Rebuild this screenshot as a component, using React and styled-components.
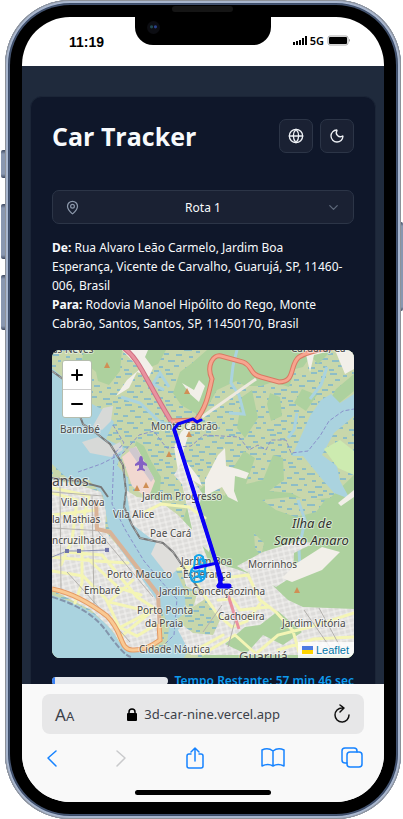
import React from 'react';
import styled, { createGlobalStyle } from 'styled-components';
import { Globe, Moon, MapPin, ChevronDown } from 'lucide-react';

const GlobalStyle = createGlobalStyle`
  * { box-sizing: border-box; }
  body { margin: 0; background: #fff; overflow: hidden; }
  button, select, input { font: inherit; color: inherit; }
`;

const Stage = styled.div`
  height: 100vh;
  padding: 0 2px 0 5px;
  display: flex;
  font-family: 'Noto Sans', 'Open Sans', sans-serif;
  font-size: 12px;
`;
const Phone = styled.div`
  position: relative;
  flex: 1;
  min-width: 0;
  display: flex;
  padding: 5px;
  border-radius: 65px;
  background: #50617f;
  box-shadow: inset 0 0 0 1px #8e9299, inset 0 0 0 3px #a9b7cf, inset 0 0 3px 4px #34435e;
`;
const SideKey = styled.span`
  position: absolute;
  ${(p) => (p.$right ? 'right: -2px;' : 'left: -4px;')}
  top: ${(p) => p.$top}px;
  width: ${(p) => (p.$right ? 2 : 4)}px;
  height: ${(p) => p.$height}px;
  border-radius: ${(p) => (p.$right ? '0 2px 2px 0' : '2px 0 0 2px')};
  background: linear-gradient(#3e4960, #8997b0 4px, #8997b0 calc(100% - 4px), #3e4960);
`;
const Bezel = styled.div`
  flex: 1;
  min-width: 0;
  display: flex;
  padding: 12px;
  border-radius: 60px;
  background: #000;
`;
const Screen = styled.div`
  flex: 1;
  min-width: 0;
  display: flex;
  flex-direction: column;
  overflow: hidden;
  border-radius: 48px;
  background: #fff;
`;
const Notch = styled.div`
  position: absolute;
  top: 16px;
  left: 50%;
  transform: translateX(-50%);
  width: 136px;
  height: 29px;
  border-radius: 0 0 18px 18px;
  background: #000;
  &::before {
    content: '';
    position: absolute;
    left: 12px;
    top: 5px;
    width: 13px;
    height: 13px;
    border-radius: 50%;
    background: radial-gradient(circle at 65% 45%, #29418c 0 1px, transparent 2px),
      radial-gradient(circle at 35% 45%, #204a50 0 1px, transparent 2px), #0c0d12;
  }
  &::after {
    content: '';
    position: absolute;
    left: 37px;
    top: -10px;
    width: 61px;
    height: 6px;
    border-radius: 3px;
    background: #151515;
  }
`;
const StatusBar = styled.header`
  flex: none;
  height: 49px;
  padding: 0 33px 0 47px;
  display: flex;
  align-items: center;
  justify-content: space-between;
  color: #000;
`;
const Clock = styled.time`
  font: 700 14px 'Liberation Sans', sans-serif;
`;
const Signal = styled.div`
  display: flex;
  align-items: center;
  gap: 3px;
  padding-bottom: 3px;
  font-weight: 600;
  font-size: 11px;
`;

const Page = styled.main`
  flex: 1;
  min-height: 0;
  overflow: hidden;
  padding: 30px 8px 0;
  background: #1f2a3c;
`;
const Card = styled.section`
  height: 700px;
  padding: 22px 21px 0;
  border: 1px solid #1b2537;
  border-radius: 12px;
  background: #0f172a;
  color: #f8fafc;
`;
const TitleRow = styled.div`
  display: flex;
  align-items: center;
  justify-content: space-between;
  gap: 7px;
  margin-bottom: 37px;
`;
const Title = styled.h1`
  margin: 0 auto 0 0;
  font-family: 'Open Sans', 'Noto Sans', sans-serif;
  font-size: 25px;
  line-height: 34px;
  font-weight: 700;
`;
const IconButton = styled.button`
  width: 34px;
  height: 34px;
  padding: 0;
  display: grid;
  place-items: center;
  border: 1px solid #2c3547;
  border-radius: 7px;
  background: #1a2133;
  color: #eef1f5;
`;
const RouteField = styled.label`
  display: flex;
  align-items: center;
  height: 34px;
  padding: 0 12px;
  border: 1px solid #2c3547;
  border-radius: 7px;
  background: #1a2133;
  color: #8b97aa;
`;
const RouteSelect = styled.select`
  flex: 1;
  appearance: none;
  border: 0;
  outline: 0;
  padding: 0;
  background: transparent;
  color: #f8fafc;
  text-align: center;
  text-align-last: center;
`;
const Addresses = styled.div`
  margin: 14px 0 17px;
  line-height: 19px;
`;
const Address = styled.p`
  margin: 0;
`;
const MapFrame = styled.div`
  position: relative;
  height: 308px;
  overflow: hidden;
  border-radius: 8px;
  background: #add19e;
`;
const MapDrawing = styled.svg`
  display: block;
  width: 100%;
  height: 100%;
  font-family: 'Noto Sans', sans-serif;
`;
const ZoomControl = styled.div`
  position: absolute;
  left: 10px;
  top: 10px;
  width: 30px;
  border: 1px solid #b5bdae;
  border-radius: 3px;
  overflow: hidden;
`;
const ZoomButton = styled.button`
  display: grid;
  place-items: center;
  width: 100%;
  height: 28px;
  padding: 0;
  border: 0;
  background: #fff;
  color: #000;
  & + & { border-top: 1px solid #ccc; }
`;
const Attribution = styled.a`
  position: absolute;
  right: 0;
  bottom: 0;
  display: flex;
  align-items: center;
  gap: 3px;
  padding: 0 5px 0 4px;
  font: 11px/16px 'Liberation Sans', sans-serif;
  color: #0078a8;
  background: rgba(255, 255, 255, 0.8);
  text-decoration: none;
`;
const Flag = styled.span`
  width: 11px;
  height: 8px;
  background: linear-gradient(#4c7be1 50%, #ffd500 50%);
`;
const ProgressRow = styled.div`
  display: flex;
  align-items: center;
  gap: 7px;
  margin-top: 14px;
`;
const Track = styled.div`
  flex: 1;
  height: 8px;
  overflow: hidden;
  border-radius: 4px;
  background: #e5e7eb;
`;
const Fill = styled.div`
  height: 100%;
  background: #3b82f6;
`;
const Remaining = styled.strong`
  color: #0e9bee;
  font-weight: 600;
  line-height: 17px;
  white-space: nowrap;
`;

const BrowserBar = styled.footer`
  flex: none;
  padding: 10px 20px 7px;
  background: #f9f9f9;
`;
const AddressBar = styled.div`
  display: flex;
  align-items: center;
  justify-content: space-between;
  height: 40px;
  padding: 0 13px;
  border-radius: 8px;
  background: #e7e7e8;
  color: #3c4148;
`;
const TextSize = styled.button`
  padding: 0;
  border: 0;
  background: none;
  font-size: 17px;
  small { font-size: 13px; }
`;
const Location = styled.label`
  display: flex;
  align-items: center;
  gap: 7px;
`;
const LocationInput = styled.input`
  field-sizing: content;
  padding: 0;
  border: 0;
  outline: 0;
  background: none;
  font-size: 13px;
`;
const PlainButton = styled.button`
  display: grid;
  place-items: center;
  padding: 0;
  border: 0;
  background: none;
  color: ${(p) => p.$color || '#1683ff'};
  &:disabled { color: #c9cacc; }
`;
const Tools = styled.nav`
  display: flex;
  align-items: center;
  justify-content: space-between;
  height: 48px;
  padding: 0 1px 0 4px;
`;
const HomeIndicator = styled.div`
  width: 136px;
  height: 5px;
  margin: 8px auto 0;
  border-radius: 3px;
  background: #000;
`;

const LABELS = [
  [52, 353, 'as Neves', 10], [60, 433, 'Barnabé', 10], [151, 430, 'Monte Cabrão', 10],
  [52, 486, 'antos', 14], [61, 506, 'Vila Nova', 10], [52, 523, 'la Mathias', 10],
  [52, 544, 'ncruzilhada', 10], [142, 500, 'Jardim Progresso', 10], [113, 518, 'Vila Alice', 10],
  [150, 537, 'Pae Cará', 10], [107, 578, 'Porto Macuco', 10], [84, 594, 'Embaré', 10],
  [181, 565, 'Jardim Boa', 10], [183, 578, 'Esperança', 10], [159, 595, 'Jardim Conceiçãozinha', 10],
  [137, 614, 'Porto Ponta', 10], [145, 627, 'da Praia', 10], [139, 653, 'Cidade Náutica', 10],
  [248, 568, 'Morrinhos', 10], [218, 620, 'Cachoeira', 10], [282, 627, 'Jardim Vitória', 10],
  [239, 661, 'Guarujá', 13], [291, 352, 'Caruara, Ca', 10],
];
const PEAKS = [[107, 365], [187, 391], [189, 434], [169, 454], [137, 488], [146, 485], [297, 590]];
const ROUTE = 'M201 420 197 422 193 419 178 424 174 429 217 565 221 585 229 587 218 586 222 579 217 563 195 568';

function CityMap() {
  return (
    <MapDrawing viewBox="52 350 302 308" preserveAspectRatio="xMidYMid slice" role="img" aria-label="Mapa da rota">
      <defs>
        <pattern id="marsh" width="41" height="31" patternUnits="userSpaceOnUse">
          <rect width="41" height="31" fill="#c8d7ab" />
          <path d="M2 2h7M15 4h4M24 1h6M34 5h5M7 8h5M20 9h8M32 11h4M0 13h5M12 14h6M25 16h4M35 18h6M4 20h7M17 20h3M28 22h7M10 25h5M21 27h7M36 26h4M1 29h5M31 30h5" stroke="#51a4e4" strokeWidth="1" />
        </pattern>
        <pattern id="streets" width="12" height="10" patternUnits="userSpaceOnUse" patternTransform="rotate(-13)">
          <rect width="12" height="10" fill="#dddcda" />
          <path d="M0 1h12M0 6h12M2 0v10M8 0v10" stroke="#f4f3f1" strokeWidth="1" />
        </pattern>
      </defs>
      <rect x="52" y="350" width="302" height="308" fill="url(#marsh)" />

      <g fill="#add19e">
        <path d="M84 350H122L120 371 109 385 98 381 96 372 82 360ZM136 350H166L158 364 148 368ZM180 372 192 363 207 350 332 350 318 364 311 356 303 367 295 369 289 387 273 382 261 386 246 386 236 381 217 390 202 417 181 405 173 393Z" />
        <path d="M242 397 252 390 258 418 245 438 237 428ZM270 393 280 397 282 416 271 421 267 404ZM302 389 317 395 306 411 294 403ZM336 389 354 374V391L337 405 330 400ZM233 468 244 451 255 458 246 484 263 480 273 455 283 458 284 480 269 491 291 493 305 500 330 498 354 475V658H202L196 573 180 530 190 498 204 486 225 496Z" />
        <path d="M136 441 144 446 151 461 161 477 159 503 146 500 133 453Z" />
      </g>
      <path d="M262 500 290 497 325 500 316 512 296 517 276 510ZM254 533 264 543 261 556 255 548Z" fill="url(#marsh)" />
      <path d="M237 350 233 366 231 383 239 395 244 414 229 413M327 367 321 385 310 399 M297 413 294 430 288 438 M169 387 160 373 153 384 164 390 M121 397 140 403 160 422 174 426" fill="none" stroke="#aad3df" strokeWidth="3" />
      <path d="M52 368 67 381 83 399 103 410 114 422 106 439 125 448 117 465 128 478 130 498 140 517 158 544 174 566 184 589 187 621 196 634 184 658H165L169 628 161 607 136 575 119 548 108 526 103 496 89 480 68 479 52 464Z" fill="#aad3df" />
      <path d="M310 416 321 400 331 394 340 403 354 394V416L334 433 322 455 337 466 340 481 350 499 334 493 321 478 303 456 292 456Z" fill="#aad3df" />
      <path d="M298 500 305 520 299 549 300 570" fill="none" stroke="#aad3df" strokeWidth="3" />
      <path d="M324 449 340 440 354 451V475L338 468Z" fill="#cdebb0" />
      <path d="M122 350H148L145 357 153 368 149 377 137 372 129 388 116 396 127 380 140 369ZM182 383 194 390 199 380 205 386 199 402 190 394ZM193 420 181 432 174 447 178 471 202 486 199 478 182 456ZM218 455 225 448 226 466 238 469 249 473 246 479 235 476 234 491 238 502 228 497 222 487 205 496 205 480ZM305 350H334L314 355 310 372ZM335 350H354V369L345 374ZM338 503 354 490V497L341 506Z" fill="#f2efe9" />
      <path d="M103 408 113 406 111 421 102 430 93 426ZM82 442 98 437 112 446 120 442 123 450 111 457 90 453Z" fill="#d7d9d7" />
      <path d="M122 457 136 446 155 481 148 499 132 486Z" fill="#f1d8d0" />
      <path d="M128 449 136 447 154 478 151 482Z" fill="#cfc8ce" />

      <path d="M52 480 75 484 101 492 106 512 105 531 117 545 139 575 160 605 160 641 143 652 124 649 112 630 91 610 52 590Z" fill="url(#streets)" />
      <path d="M126 490 137 497 158 500 178 515 199 537 218 585 198 592 186 586 181 566 154 541 132 524Z" fill="url(#streets)" />
      <path d="M182 484 174 475 181 463 202 493 198 513 211 539 209 552 194 538Z" fill="url(#streets)" />
      <path d="M204 567 216 563 236 569 267 580 288 600 303 607 354 609V655H191L178 630 188 620 194 605Z" fill="url(#streets)" />
      <path d="M237 566 263 552 298 541 314 543 294 553 293 576 276 587 250 574Z" fill="url(#streets)" />
      <path d="M156 543 169 544 183 564 169 577 151 554Z" fill="#dfdedb" />
      <path d="M297 563 322 547 340 552 322 570 292 582 282 578Z" fill="#f2efe9" />
      <path d="M225 644 245 627 260 625 278 611 302 632 283 645 263 635 246 654Z" fill="#add19e" />
      <path d="M176 620 190 609 205 599 220 620 213 635 193 633Z" fill="url(#marsh)" />
      <path d="M52 595Q104 611 119 642L136 651 178 650V658H52Z" fill="#aad3df" />

      <g fill="none" stroke="#f4f5b5" strokeWidth="3" strokeLinecap="round">
        <path d="M53 488 89 496 82 524 82 583 75 603M53 493 77 500 72 540 61 565M52 515 97 510M52 557 96 561 128 563M52 571 83 576 106 599 119 627 137 636 157 624M65 552 102 555 137 597 159 611M88 559 119 588 141 595M133 580 109 602 151 612 119 638M151 611 119 628M145 512 161 504 189 507 205 518M178 569 201 565 217 579 248 575 260 600 276 612 293 631 299 652M185 565 204 595 218 615 232 627 247 621 260 604M218 600 232 599 240 610 269 607M203 654 235 635 255 653M194 651 223 635M258 652 278 635 310 627 354 613M278 650 314 639 354 637" />
      </g>
      <g fill="none" stroke="#b3b1ad" strokeWidth="1">
        <path d="M52 492 103 496M52 528 105 531M60 485 61 590M92 496 94 604M98 531 153 597M67 572 130 642M222 605 203 632M236 617 228 647M304 610 334 653M319 608 342 650" />
      </g>
      <path d="M96 500 97 529 110 532 137 567 158 594 160 632" fill="none" stroke="#d9b397" strokeWidth="4" />
      <path d="M52 589Q78 594 107 616C124 633 119 649 132 650Q145 651 160 640L159 624" fill="none" stroke="#e59a64" strokeWidth="5" />
      <path d="M52 589Q78 594 107 616C124 633 119 649 132 650Q145 651 160 640L159 624" fill="none" stroke="#f9c993" strokeWidth="3" />
      <path d="M52 371 67 382 83 424 96 433 110 444 123 465 126 491 124 507 132 525 140 538 163 543 173 552 184 568 203 595 M52 478 78 481 101 487 108 497" fill="none" stroke="#777" strokeWidth="2" />
      <path d="M52 371 67 382 83 424 96 433 110 444 123 465 126 491 124 507 132 525 140 538 163 543 173 552 184 568" fill="none" stroke="#aaa" strokeDasharray="5 4" />
      <path d="M52 597Q90 608 107 632T131 657" fill="none" stroke="#8395ac" strokeWidth="2" strokeDasharray="6 2" />
      <path d="M78 472 101 464 123 453 139 435 154 431 161 441 167 448 191 446 204 435 239 437 249 450 258 445 266 450 271 440 286 440 291 453 308 451 320 436 329 421 343 411 354 409M113 425 124 443 114 454 112 504 126 531 144 561 160 580 177 599 174 635 156 653" fill="none" stroke="#8990ca" strokeWidth="1" strokeDasharray="4 2" />
      <path d="M202 417 256 379" stroke="#eee9df" strokeWidth="3" />
      <path d="M124 348C140 360 144 377 171 421" fill="none" stroke="#ce7182" strokeWidth="5" />
      <path d="M124 348C140 360 144 377 171 421M228 595 239 629" fill="none" stroke="#e992a0" strokeWidth="3" />
      <path d="M171 421 196 420 C207 407 209 391 212 379 206 366 213 354 221 356L243 362C253 366 249 374 261 377L279 382C296 382 289 365 299 357Q311 350 332 348" fill="none" stroke="#d87963" strokeWidth="5" />
      <path d="M171 421 196 420 C207 407 209 391 212 379 206 366 213 354 221 356L243 362C253 366 249 374 261 377L279 382C296 382 289 365 299 357Q311 350 332 348" fill="none" stroke="#f7a58f" strokeWidth="3" />
      <path d="M52 557 67 551H79L107 550" fill="none" stroke="#8b91b7" />
      <path d="M65 549h4v4h-4ZM77 549h4v4h-4ZM105 548h4v4h-4Z" fill="#7075aa" />
      <path d="M141 456q2 0 2 5l4 3v2l-4-1v3l2 2v1l-4-1-4 1v-1l2-2v-3l-4 1v-2l4-3q0-5 2-5Z" fill="#8461c4" />
      {PEAKS.map(([x, y]) => <path key={`${x}-${y}`} d={`M${x} ${y - 3}l3 6h-6Z`} fill="#d08f55" />)}

      <g fill="#4b4a48" stroke="#fff" strokeOpacity=".5" strokeWidth="2" paintOrder="stroke" strokeLinejoin="round">
        {LABELS.map(([x, y, text, size]) => <text key={text} x={x} y={y} fontSize={size}>{text}</text>)}
        <g fontSize="13" fontStyle="italic" fill="#32322e">
          <text x="292" y="528">Ilha de</text>
          <text x="274" y="545">Santo Amaro</text>
        </g>
      </g>

      <g fill="none" stroke="#13a5e9" strokeWidth="2">
        <path d="M195 559v-2q4-4 8 0v4q5 2 2 8 2 10-4 12-9 3-10-3-2-7 3-11Z" />
        <circle cx="202" cy="562" r="3" />
        <circle cx="202" cy="574" r="3" />
        <path d="M191 570q5 3 9 0M193 579q5-6 9 1" />
      </g>
      <path d={ROUTE} fill="none" stroke="#0a00f5" strokeWidth="3" strokeLinejoin="round" strokeLinecap="round" />
      <path d="M174 429 217 565 221 585" fill="none" stroke="#0a00f5" strokeWidth="4" strokeLinejoin="round" />
      <path d="M219 586h10" stroke="#0a00f5" strokeWidth="5" strokeLinecap="round" />
    </MapDrawing>
  );
}

const Line = ({ w = 24, h = 24, stroke = 1.5, children }) => (
  <svg width={w} height={h} viewBox={`0 0 ${w} ${h}`} fill="none" stroke="currentColor" strokeWidth={stroke} strokeLinecap="round" strokeLinejoin="round" aria-hidden="true">
    {children}
  </svg>
);

export default function App() {
  const progress = 3;
  return (
    <>
      <GlobalStyle />
      <Stage>
        <Phone>
          <SideKey $top={150} $height={28} />
          <SideKey $top={204} $height={55} />
          <SideKey $top={275} $height={55} />
          <SideKey $right $top={222} $height={89} />
          <Bezel>
            <Screen>
              <StatusBar>
                <Clock>11:19</Clock>
                <Signal>
                  <svg width="14" height="9" viewBox="0 0 14 9" aria-hidden="true">
                    <path d="M0 6h2v3H0ZM3 5h2v4H3ZM6 4h2v5H6ZM9 2h2v7H9ZM12 0h2v9h-2Z" />
                  </svg>
                  5G
                  <svg width="24" height="11" viewBox="0 0 24 11" aria-hidden="true">
                    <rect x="1" y="1" width="20" height="9" rx="2" fill="none" stroke="#aaa" />
                    <rect x="2" y="2" width="18" height="7" rx="1" />
                    <path d="M22 4q2 1 0 3Z" fill="#999" />
                  </svg>
                </Signal>
              </StatusBar>
              <Page>
                <Card>
                  <TitleRow>
                    <Title>Car Tracker</Title>
                    <IconButton aria-label="Idioma"><Globe size={16} strokeWidth={2} /></IconButton>
                    <IconButton aria-label="Tema"><Moon size={16} strokeWidth={2} /></IconButton>
                  </TitleRow>
                  <RouteField>
                    <MapPin size={15} aria-hidden="true" />
                    <RouteSelect aria-label="Rota" defaultValue="1">
                      <option value="1">Rota 1</option>
                    </RouteSelect>
                    <ChevronDown size={15} color="#5d687a" aria-hidden="true" />
                  </RouteField>
                  <Addresses>
                    <Address><b>De:</b> Rua Alvaro Leão Carmelo, Jardim Boa<br />Esperança, Vicente de Carvalho, Guarujá, SP, 11460-006, Brasil</Address>
                    <Address><b>Para:</b> Rodovia Manoel Hipólito do Rego, Monte Cabrão, Santos, Santos, SP, 11450170, Brasil</Address>
                  </Addresses>
                  <MapFrame>
                    <CityMap />
                    <ZoomControl>
                      <ZoomButton aria-label="Aproximar"><Line w={14} h={14} stroke={2}><path d="M2 7h10M7 2v10" /></Line></ZoomButton>
                      <ZoomButton aria-label="Afastar"><Line w={14} h={14} stroke={2}><path d="M2 7h10" /></Line></ZoomButton>
                    </ZoomControl>
                    <Attribution href="#leaflet"><Flag />Leaflet</Attribution>
                  </MapFrame>
                  <ProgressRow>
                    <Track role="progressbar" aria-label="Progresso" aria-valuenow={progress}>
                      <Fill style={{ width: `${progress}%` }} />
                    </Track>
                    <Remaining>Tempo Restante: 57 min 46 sec</Remaining>
                  </ProgressRow>
                </Card>
              </Page>
              <BrowserBar>
                <AddressBar>
                  <TextSize aria-label="Tamanho do texto">A<small>A</small></TextSize>
                  <Location>
                    <svg width="10" height="13" viewBox="0 0 10 13" aria-hidden="true">
                      <path d="M2 6V4a3 3 0 0 1 6 0v2" fill="none" stroke="#000" strokeWidth="1.5" />
                      <rect x="0" y="5" width="10" height="8" rx="1" />
                    </svg>
                    <LocationInput aria-label="Endereço" readOnly value="3d-car-nine.vercel.app" />
                  </Location>
                  <PlainButton $color="#111" aria-label="Recarregar">
                    <Line w={18} h={20}><path d="M9 4a7 7 0 1 0 7 7M7 1l4 3-4 4" /></Line>
                  </PlainButton>
                </AddressBar>
                <Tools>
                  <PlainButton aria-label="Voltar"><Line w={12} h={18}><path d="M10 2 2 9l8 8" /></Line></PlainButton>
                  <PlainButton disabled aria-label="Avançar"><Line w={14} h={18}><path d="m3 2 8 7-8 8" /></Line></PlainButton>
                  <PlainButton aria-label="Compartilhar">
                    <Line w={20} h={24}><path d="M6 8H4Q2 8 2 10v10q0 2 2 2h12q2 0 2-2V10q0-2-2-2h-2M10 15V2M6 6l4-4 4 4" /></Line>
                  </PlainButton>
                  <PlainButton aria-label="Favoritos">
                    <Line w={24} h={22}><path d="M12 4Q7 0 1 3v16q6-3 11 0 5-3 11 0V3q-6-3-11 1v15" /></Line>
                  </PlainButton>
                  <PlainButton aria-label="Abas">
                    <Line w={22} h={22}><path d="M6 16H4q-3 0-3-3V4q0-3 3-3h9q3 0 3 3v1" /><rect x="6" y="5" width="15" height="15" rx="3" /></Line>
                  </PlainButton>
                </Tools>
                <HomeIndicator />
              </BrowserBar>
            </Screen>
          </Bezel>
          <Notch />
        </Phone>
      </Stage>
    </>
  );
}
